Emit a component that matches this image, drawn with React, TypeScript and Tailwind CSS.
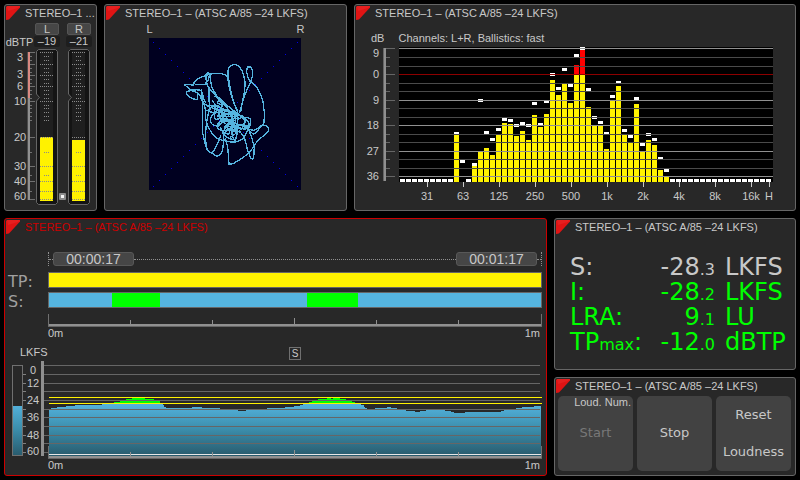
import type { ReactNode } from 'react';
import clsx from 'clsx';

const TITLE = 'STEREO–1 – (ATSC A/85 –24 LKFS)';

/* ---------- shared ---------- */

function Panel({ title = TITLE, active = false, className, children }: {
    title?: string;
    active?: boolean;
    className?: string;
    children: ReactNode;
}) {
    return (
        <section
            className={clsx(
                'min-w-0 rounded-[3px] border bg-[#282828]',
                active ? 'border-[#cc0000]' : 'border-[#666666]',
                className,
            )}
        >
            <header className="flex items-center gap-[5px] pt-px pl-px">
                <svg viewBox="0 0 14 14" className="size-3.5 shrink-0" aria-hidden="true">
                    <path d="M1 0H14V1.5L3 13.5L0 14V1Z" fill="#e01414" />
                    <path d="M1 0H14L12 2L2 5Z" fill="#f03030" opacity="0.4" />
                </svg>
                <h2 className={clsx('text-[11px] leading-3.5 whitespace-nowrap', active && 'text-[#cc0000]')}>{title}</h2>
            </header>
            {children}
        </section>
    );
}

/* ---------- true peak meter ---------- */

const METER_LABELS = [
    ['3', 61], ['3', 78], ['6', 90], ['10', 105], ['20', 141], ['30', 170], ['40', 185], ['60', 200],
] as const;
const METER_MAJOR = [52, 64, 75, 86, 101, 137, 166, 181, 199];
const METER_MINOR = [56, 60, 68, 72, 79, 83, 90, 94, 98, 105, 108, 112, 116, 120, 152, 175, 191];

function MeterBar({ x, top }: { x: number; top: number }) {
    return (
        <g>
            <path
                d={`M${x + 2.5} 49.5H${x + 19.5}L${x + 21.5} 51.5V202.5L${x + 19.5} 204.5H${x + 2.5}L${x + 0.5} 202.5V101L${x + 3.5} 97.5L${x + 0.5} 94V51.5Z`}
                fill="#141414"
                stroke="#666666"
            />
            <rect x={x + 4} y="51" width="13" height="150" fill="#1f1f1f" />
            <rect x={x + 4} y={top} width="13" height={201 - top} fill="#fff200" />
            {[...METER_MAJOR, 191].map((y) => (
                <line key={y} x1={x + 4} x2={x + 17} y1={y + 0.5} y2={y + 0.5} stroke="#8a8a8a" strokeDasharray="1 1" />
            ))}
            {METER_MINOR.slice(0, -1).map((y) => (
                <line key={y} x1={x + 8} x2={x + 13} y1={y + 0.5} y2={y + 0.5} stroke="#8a8a8a" strokeDasharray="1 1" />
            ))}
        </g>
    );
}

function MeterPanel() {
    return (
        <Panel title="STEREO–1 ...">
            <div className="mt-[3px] grid grid-cols-[29fr_26fr_6fr_26fr_4fr] grid-rows-[12px_11px] gap-y-px text-center text-[11px]">
                <span className="col-start-2 mx-px rounded-[2px] border border-[#555555] bg-[#464646] leading-2.5">L</span>
                <span className="col-start-4 mx-px rounded-[2px] border border-[#555555] bg-[#464646] leading-2.5">R</span>
                <span className="col-start-1 leading-3">dBTP</span>
                <span className="col-start-2 rounded-[2px] bg-[#1e1e1e] leading-[11px]">–19</span>
                <span className="col-start-4 rounded-[2px] bg-[#1e1e1e] leading-[11px]">–21</span>
            </div>
            <svg viewBox="5 47 91 163" className="w-full" fill="#c8c8c8" role="img" aria-label="True peak meter">
                <rect x="28" y="52" width="2" height="46" fill="#d98880" />
                <rect x="28" y="98" width="2" height="102" fill="#909090" />
                <path d="M27.5 52V200" stroke="#4c4c4c" />
                {METER_MAJOR.map((y) => <rect key={y} x="30" y={y} width="5" height="1" fill="#707070" />)}
                {METER_MINOR.map((y) => <rect key={y} x="30" y={y} width="2" height="1" fill="#707070" />)}
                {METER_LABELS.map(([label, y]) => (
                    <text key={y} x="20" y={y} fontSize="11" textAnchor="middle">{label}</text>
                ))}
                <MeterBar x={36} top={137} />
                <MeterBar x={68} top={140} />
                <rect x="59" y="193" width="7" height="7" rx="1" fill="#8a8a8a" />
                <rect x="61" y="195" width="3" height="3" fill="#f4f4f4" />
            </svg>
        </Panel>
    );
}

/* ---------- vectorscope ---------- */

const TRACE = [
    'M205 192C190 160 180 120 174 75C172 52 182 42 198 44C214 50 226 76 225 108C222 145 215 165 208 190',
    'M212 186C214 150 230 120 242 98C228 78 227 52 236 50C250 50 251 74 242 96C264 106 281 150 280 168L284 190L281 224C268 226 268 238 250 241C238 240 232 236 220 228',
    'M113 74C140 67 168 70 173 82C176 112 184 146 202 182',
    'M42 103L70 105C72 88 92 80 116 74M42 103L62 120C70 122 84 116 94 122C100 134 98 144 106 158',
    'M50 126C62 118 78 124 84 131L82 142C84 152 74 148 66 145C56 140 48 136 50 126',
    'M104 80L112 68L119 70L116 88L106 104L94 103L76 104M110 70C102 92 116 104 117 122L118 182',
    'M119 70C124 100 122 116 138 132C142 150 160 162 180 172L200 190L212 198',
    'M106 96C118 118 128 130 142 140C158 150 172 166 190 184L206 204',
    'M84 131C98 142 92 152 102 162C112 170 140 166 158 176C176 186 190 196 204 196',
    'M94 118C100 170 96 210 98 250C106 280 108 306 122 308L140 318C156 318 158 300 160 282C164 262 160 244 150 232',
    'M118 176C108 216 104 250 108 284C112 306 124 314 131 302C142 282 150 272 152 254',
    'M165 266C176 282 174 312 177 343L190 341C204 330 236 318 248 294C262 280 254 276 268 268C284 252 298 250 296 236C292 224 280 224 272 230C262 240 264 250 250 252L234 240',
    'M212 248C222 256 230 280 232 300C240 314 240 326 247 328L251 322C252 300 256 296 250 282C248 262 236 248 234 226',
    'M102 162C112 184 98 210 120 240C130 262 150 272 172 274C200 282 222 270 228 250C238 232 246 220 240 206C228 198 214 202 200 208',
    'M126 150L138 168L132 190C116 206 118 222 134 226C154 230 160 208 172 214C190 220 200 226 198 250L180 262',
    'M118 182C126 160 150 160 152 182C160 200 140 220 134 204C130 186 146 172 160 182C170 190 182 178 192 192C204 212 192 232 176 240C160 250 160 232 172 222C186 208 196 200 206 208',
    'M140 198C160 196 186 206 210 196C226 198 232 212 222 222C208 230 190 216 174 214C152 208 138 220 142 234C150 244 170 246 186 232C202 222 226 226 240 232',
    'M146 152C160 162 178 176 186 196C190 214 184 234 176 254L160 246C164 226 186 218 196 200C190 186 176 182 162 178',
    'M128 166C146 184 152 196 178 192C192 204 184 222 164 236C156 250 166 266 190 268M200 186C206 214 204 246 196 272C180 256 186 236 190 220C176 206 158 206 142 206',
    'M96 150C104 168 124 176 148 178C160 188 164 202 158 216L146 228C148 208 164 196 184 184C196 188 214 200 222 208C230 224 216 236 206 244C190 250 176 238 168 230',
    'M134 138L150 146L142 158L158 168L148 180L176 196L166 206L192 212L176 222L204 232L184 242L212 246',
    'M110 180C122 192 140 184 148 190C142 204 158 212 170 224C182 236 206 230 226 238C244 226 238 214 226 208',
];

function ScopePanel() {
    const dots = Array.from({ length: 25 }, (_, i) => i * 18);
    return (
        <Panel>
            <div className="mx-auto mt-0.5 flex w-[158px] justify-between text-[11px] leading-3.5">
                <span>L</span>
                <span>R</span>
            </div>
            <div className="mt-0.5 flex justify-center pr-px pb-5">
                <svg viewBox="-63 -36 456 456" className="size-38 bg-[#000020]" role="img" aria-label="Vectorscope">
                    {dots.map((d) => (
                        <g key={d} fill="#0000e6" shapeRendering="crispEdges">
                            <rect x={d - 51} y={d - 24} width="3" height="3" />
                            <rect x={381 - d} y={d - 24} width="3" height="3" />
                        </g>
                    ))}
                    <g fill="none" stroke="#55b4df" strokeWidth="4" strokeLinejoin="round" shapeRendering="crispEdges">
                        {TRACE.map((d) => <path key={d} d={d} />)}
                    </g>
                </svg>
            </div>
        </Panel>
    );
}

/* ---------- spectrum ---------- */

const FLOOR = 182;

// [band, bar top, peak top]
const BANDS: [number, number, number][] = [
    [9, 135, 132], [10, FLOOR, 160], [12, 166, 163], [13, 151, 99], [14, 148, 131], [15, 155, 138],
    [16, 134, 128], [17, 123, 118], [18, 124, 119], [19, 136, 124], [20, 131, 122], [21, 140, 124],
    [22, 115, 102], [23, 127, 123], [24, 114, 100], [25, 80, 73], [26, 95, 87], [27, 83, 68],
    [28, 103, 84], [29, 65, 54], [30, 50, 47], [31, 107, 88], [32, 125, 116], [33, 125, 121],
    [34, 149, 132], [35, 100, 95], [36, 86, 81], [37, 135, 129], [38, 142, 135], [39, 104, 97],
    [40, 151, 143], [41, 140, 133], [42, 145, 138], [43, 170, 157], [44, 176, 169],
];
const IDLE = Array.from({ length: 62 }, (_, i) => i).filter((i) => !BANDS.some(([b]) => b === i));

const DB_MAJOR = [['9', 48], ['0', 74], ['9', 100], ['18', 125], ['27', 151], ['36', 176]] as const;
const DB_MINOR = [57, 66, 83, 91, 108, 117, 134, 142, 159, 168];
const FREQS = [
    ['31', 427], ['63', 463], ['125', 499], ['250', 535], ['500', 571], ['1k', 607],
    ['2k', 643], ['4k', 679], ['8k', 715], ['16k', 751], ['H', 769],
] as const;

function SpectrumPanel() {
    return (
        <Panel>
            <div className="mt-[11px] flex gap-3.5 pl-4 text-[11px] leading-3.5">
                <span>dB</span>
                <span>Channels: L+R, Ballistics: fast</span>
            </div>
            <svg viewBox="355 45 440 165" className="w-full" fill="#c8c8c8" role="img" aria-label="Spectrum">
                <rect x="399" y="47" width="374" height="135" fill="#000000" />
                {BANDS.map(([band, top]) => (
                    <g key={band}>
                        <rect x={400 + band * 6} y={Math.max(top, 74)} width="5" height={FLOOR - Math.max(top, 74)} fill="#fff200" />
                        {top < 74 && <rect x={400 + band * 6} y={top} width="5" height={74 - top} fill="#ff0000" />}
                    </g>
                ))}
                {BANDS.map(([band, , peak]) => (
                    <rect key={band} x={400 + band * 6} y={peak} width="5" height="3" fill="#ffffff" />
                ))}
                {IDLE.map((band) => (
                    <rect key={band} x={400 + band * 6} y="179" width="5" height="3" fill="#ffffff" />
                ))}
                {DB_MINOR.map((y) => (
                    <g key={y}>
                        <rect x="399" y={y} width="374" height="1" fill="#4a4a4a" />
                        <rect x="386" y={y} width="4" height="1" fill="#666666" />
                    </g>
                ))}
                {DB_MAJOR.map(([label, y]) => (
                    <g key={y}>
                        <rect x="399" y={y} width="374" height="1" fill={label === '0' ? '#8c0000' : '#909090'} />
                        <rect x="386" y={y} width="9" height="1" fill="#666666" />
                        <text x="379" y={y === 48 ? 57 : y + 4} fontSize="11" textAnchor="end">{label}</text>
                    </g>
                ))}
                <rect x="383" y="48" width="1" height="133" fill="#666666" />
                <rect x="384" y="48" width="2" height="133" fill="#909090" />
                {FREQS.map(([label, x]) => (
                    <g key={x}>
                        <rect x={x} y="182" width="1" height="5" fill="#c8c8c8" />
                        <text x={x} y="200" fontSize="11" textAnchor="middle">{label}</text>
                    </g>
                ))}
            </svg>
        </Panel>
    );
}

/* ---------- loudness history ---------- */

// Each step holds the level until the next x.
const HISTORY: [number, number][] = [
    [49, 410], [51, 408], [57, 407], [66, 406], [75, 405], [102, 403], [114, 402], [120, 401], [126, 399],
    [132, 398], [145, 399], [154, 401], [160, 404], [163, 405], [164, 407], [166, 408], [192, 407],
    [202, 408], [220, 410], [238, 411], [246, 410], [267, 408], [285, 407], [294, 406], [300, 405],
    [303, 403], [309, 402], [312, 401], [318, 399], [327, 398], [331, 399], [333, 398], [340, 399],
    [346, 401], [352, 402], [355, 404], [361, 405], [364, 407], [365, 408], [367, 410], [375, 408],
    [387, 407], [391, 408], [397, 410], [406, 411], [415, 412], [420, 411], [426, 410], [445, 411],
    [451, 412], [454, 413], [465, 412], [501, 411], [504, 410], [516, 408], [522, 407], [534, 406],
];
const HISTORY_END = 541;
const TARGET = 403;
const historySteps = HISTORY.map(([, y], i) => `V${Math.max(y, TARGET)}H${HISTORY[i + 1]?.[0] ?? HISTORY_END}`);

const LKFS_LABELS = [['0', 374], ['12', 387], ['24', 404], ['36', 421], ['48', 439], ['60', 455]] as const;
const LKFS_LINES = [365, 374, 383, 391, 400, 409, 417, 426, 435, 443];

function TimeTicks({ y }: { y: number }) {
    return (
        <g fill="#909090">
            <rect x="48" y={y - 10} width="1" height="13" fill="#707070" />
            <rect x="541" y={y - 10} width="1" height="13" fill="#707070" />
            {[130, 212, 376, 458].map((x) => <rect key={x} x={x} y={y - 4} width="1" height="4" />)}
            <rect x="294" y={y - 6} width="1" height="6" />
            <rect x="49" y={y} width="492" height="2" />
            <rect x="48" y={y + 2} width="494" height="1" fill="#666666" />
        </g>
    );
}

function TimeLabels() {
    return (
        <div className="flex justify-between pr-1.5 pl-[43px] text-[11px] leading-2.5">
            <span>0m</span>
            <span>1m</span>
        </div>
    );
}

function StatusRow({ label, children }: { label: string; children: ReactNode }) {
    return (
        <div className="flex h-5 items-start pr-1 pl-[3px]">
            <span className="w-10 shrink-0 font-['DejaVu_Sans',sans-serif] text-base leading-5 text-[#a0a0a0]">{label}</span>
            <div className="flex h-4 flex-1 border border-[#666666]">{children}</div>
        </div>
    );
}

function TimePill({ children }: { children: ReactNode }) {
    return (
        <time className="h-3.5 w-[81px] rounded-[3px] border border-[#585858] bg-[#464646] text-center text-sm leading-3">
            {children}
        </time>
    );
}

function HistoryPanel() {
    return (
        <Panel active>
            <div className="mt-[18px] mr-1 ml-[43px] flex h-3.5 items-center border-x border-dotted border-[#909090]">
                <span className="w-1 border-t border-dotted border-[#909090]" />
                <TimePill>00:00:17</TimePill>
                <span className="flex-1 border-t border-dotted border-[#909090]" />
                <TimePill>00:01:17</TimePill>
                <span className="w-1 border-t border-dotted border-[#909090]" />
            </div>
            <div className="mt-1.5">
                <StatusRow label="TP:">
                    <div className="flex-1 bg-[#fff200]" />
                </StatusRow>
                <StatusRow label="S:">
                    <div className="grow-[63] bg-[#55b4df]" />
                    <div className="grow-[48] bg-[#00ff00]" />
                    <div className="grow-[147] bg-[#55b4df]" />
                    <div className="grow-[51] bg-[#00ff00]" />
                    <div className="grow-[183] bg-[#55b4df]" />
                </StatusRow>
            </div>
            <svg viewBox="5 312 541 16" className="w-full" aria-hidden="true">
                <TimeTicks y={324} />
            </svg>
            <TimeLabels />
            <div className="mt-[9px] flex items-start pr-1 pl-[15px] text-[11px] leading-[11px]">
                <span className="w-7">LKFS</span>
                <span className="mx-auto border border-[#707070] px-0.5 text-[10px] leading-[11px]">S</span>
            </div>
            <svg viewBox="5 360 541 100" className="w-full" fill="#c8c8c8" role="img" aria-label="Short term loudness over time">
                <defs>
                    <linearGradient id="level" x1="0" y1="403" x2="0" y2="456" gradientUnits="userSpaceOnUse">
                        <stop offset="0" stopColor="#55b4df" />
                        <stop offset="0.5" stopColor="#3b8dab" />
                        <stop offset="1" stopColor="#285a6c" />
                    </linearGradient>
                </defs>
                <rect x="12.5" y="365.5" width="10" height="90" fill="none" stroke="#707070" />
                <rect x="13" y="406" width="9" height="49" fill="url(#level)" />
                {[...LKFS_LINES.slice(1), 452].map((y) => <rect key={y} x="23" y={y} width="3" height="1" fill="#808080" />)}
                {LKFS_LABELS.map(([label, y]) => (
                    <text key={label} x="33" y={y} fontSize="11" textAnchor="middle">{label}</text>
                ))}
                <path d={`M49 456${historySteps.join('')}V456Z`} fill="url(#level)" />
                {HISTORY.map(([x, y], i) => y < TARGET && (
                    <rect key={x} x={x} y={y} width={HISTORY[i + 1][0] - x} height={TARGET - y} fill="#00ff00" />
                ))}
                {LKFS_LINES.map((y) => <rect key={y} x="44" y={y} width="496" height="1" fill="#666666" />)}
                <rect x="41" y="361" width="3" height="95" fill="#909090" />
                <rect x="44" y="452" width="4" height="1" fill="#666666" />
                <rect x="49" y="397" width="493" height="1" fill="#fff200" />
                <rect x="49" y="403" width="493" height="1" fill="#fff200" />
                <rect x="49" y="454" width="493" height="1" fill="#e6e6e6" />
                <TimeTicks y={456} />
            </svg>
            <TimeLabels />
        </Panel>
    );
}

/* ---------- loudness numbers ---------- */

function Reading({ label, value, decimal, unit, alert = true }: {
    label: ReactNode;
    value: string;
    decimal: string;
    unit: string;
    alert?: boolean;
}) {
    return (
        <tr className={clsx(alert && 'text-[#00ff00]')}>
            <th scope="row" className="pl-[15px] text-left font-normal">{label}</th>
            <td className="text-right">{value}<span className="text-base leading-none">{decimal}</span></td>
            <td className="w-20 pl-2.5">{unit}</td>
        </tr>
    );
}

function NumbersPanel() {
    return (
        <Panel className="grow">
            <table className="mt-[21px] w-full font-['DejaVu_Sans',sans-serif] text-2xl leading-[25px] whitespace-nowrap">
                <tbody>
                    <Reading label="S:" value="-28" decimal=".3" unit="LKFS" alert={false} />
                    <Reading label="I:" value="-28" decimal=".2" unit="LKFS" />
                    <Reading label="LRA:" value="9" decimal=".1" unit="LU" />
                    <Reading label={<>TP<span className="text-base leading-none">max</span>:</>} value="-12" decimal=".0" unit="dBTP" />
                </tbody>
            </table>
        </Panel>
    );
}

/* ---------- controls ---------- */

const BUTTON = 'h-[75px] rounded-[5px] bg-[#424242] pb-0.5 disabled:text-[#787878]';

function ControlsPanel() {
    return (
        <Panel>
            <div className="grid grid-cols-3 gap-1 pt-[3px] pr-1 pb-1 pl-[3px] font-['DejaVu_Sans',sans-serif] text-[13px]">
                <div className="relative grid">
                    <button type="button" disabled className={BUTTON}>Start</button>
                    <span className="absolute top-0 right-0.5 font-['Liberation_Sans',sans-serif] text-[11px] leading-3">Loud. Num.</span>
                </div>
                <button type="button" className={BUTTON}>Stop</button>
                <button type="button" className={clsx(BUTTON, 'leading-[37px]')}>Reset<br />Loudness</button>
            </div>
        </Panel>
    );
}

export default function App() {
    return (
        <main className="flex min-h-screen flex-col gap-[7px] bg-black p-1 font-['Liberation_Sans',sans-serif] text-[#c8c8c8]">
            <div className="grid grid-cols-[93fr_243fr_442fr] gap-[7px]">
                <MeterPanel />
                <ScopePanel />
                <SpectrumPanel />
            </div>
            <div className="grid grow grid-cols-[543fr_242fr] gap-[7px]">
                <HistoryPanel />
                <div className="flex flex-col gap-[7px]">
                    <NumbersPanel />
                    <ControlsPanel />
                </div>
            </div>
        </main>
    );
}
